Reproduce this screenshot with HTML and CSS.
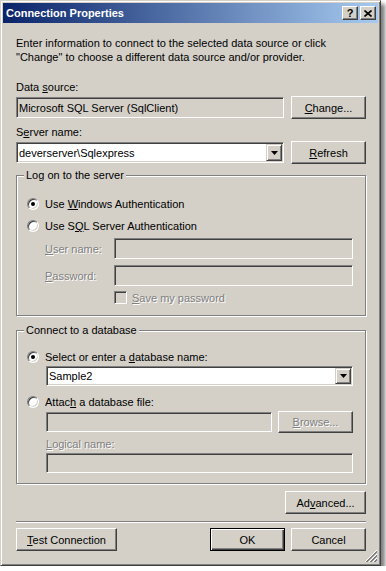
FILE: index.html
```html
<!DOCTYPE html>
<html lang="en">
<head>
  <meta charset="UTF-8" />
  <title>Connection Properties</title>
  <link rel="stylesheet" href="styles.css">
</head>
<body>

  <div class="window">
    <!-- title bar -->
    <div class="titlebar">
      <span class="title">Connection Properties</span>
      <span class="cap-btn help">?</span>
      <span class="cap-btn close">
        <svg width="8" height="7" viewBox="0 0 8 7"><path d="M0.5 0.5L7.5 6.5M7.5 0.5L0.5 6.5" stroke="#000" stroke-width="1.6"/></svg>
      </span>
    </div>

    <div class="content">
      <p class="intro">Enter information to connect to the selected data source or click "Change" to choose a different data source and/or provider.</p>

      <div class="label label-first">Data <u>s</u>ource:</div>
      <div class="row">
        <div class="edit readonly">Microsoft SQL Server (SqlClient)</div>
        <button class="btn"><u>C</u>hange...</button>
      </div>

      <div class="label label-server">S<u>e</u>rver name:</div>
      <div class="row row-tight">
        <div class="edit combo">
          <span class="combo-text">deverserver\Sqlexpress</span>
          <span class="drop"><svg width="7" height="4" viewBox="0 0 7 4"><path d="M0 0H7L3.5 4Z" fill="#000"/></svg></span>
        </div>
        <button class="btn"><u>R</u>efresh</button>
      </div>

      <fieldset class="group group-logon">
        <legend>Log on to the server</legend>
        <div class="radio-row radio-first">
          <span class="radio checked"></span>
          <span>Use <u>W</u>indows Authentication</span>
        </div>
        <div class="radio-row radio-second">
          <span class="radio"></span>
          <span>Use S<u>Q</u>L Server Authentication</span>
        </div>
        <div class="field-row field-user">
          <span class="field-label disabled"><u>U</u>ser name:</span>
          <div class="edit disabled-edit"></div>
        </div>
        <div class="field-row field-pass">
          <span class="field-label disabled"><u>P</u>assword:</span>
          <div class="edit disabled-edit"></div>
        </div>
        <div class="check-row">
          <span class="check"></span>
          <span class="disabled"><u>S</u>ave my password</span>
        </div>
      </fieldset>

      <fieldset class="group group-db">
        <legend>Connect to a database</legend>
        <div class="radio-row db-radio-first">
          <span class="radio checked"></span>
          <span>Select or enter a <u>d</u>atabase name:</span>
        </div>
        <div class="edit combo db-combo indent">
          <span class="combo-text">Sample2</span>
          <span class="drop"><svg width="7" height="4" viewBox="0 0 7 4"><path d="M0 0H7L3.5 4Z" fill="#000"/></svg></span>
        </div>
        <div class="radio-row db-radio-second">
          <span class="radio"></span>
          <span>Attac<u>h</u> a database file:</span>
        </div>
        <div class="attach-row indent">
          <div class="edit disabled-edit"></div>
          <button class="btn btn-disabled"><u>B</u>rowse...</button>
        </div>
        <div class="logical-label indent disabled"><u>L</u>ogical name:</div>
        <div class="edit disabled-edit logical-edit indent"></div>
      </fieldset>

      <div class="advanced-row">
        <button class="btn btn-advanced">Ad<u>v</u>anced...</button>
      </div>

      <div class="separator"></div>

      <div class="footer">
        <button class="btn btn-test"><u>T</u>est Connection</button>
        <button class="btn btn-default">OK</button>
        <button class="btn">Cancel</button>
      </div>
    </div>

    <svg class="grip" width="12" height="12" viewBox="0 0 12 12">
      <path d="M12 0L0 12M12 4L4 12M12 8L8 12" stroke="#fff" stroke-width="1"/>
      <path d="M12 1L1 12M12 2L2 12M12 5L5 12M12 6L6 12M12 9L9 12M12 10L10 12" stroke="#808080" stroke-width="1"/>
    </svg>
  </div>

</body>
</html>
```

FILE: styles.css
```css
* { margin: 0; padding: 0; box-sizing: border-box; }
body {
  background: #fff;
  font-family: "Liberation Sans", Arial, sans-serif;
  font-size: 11px;
  color: #000;
}
u { text-underline-offset: 1px; }

.window {
  position: relative;
  width: 381px;
  height: 566px;
  background: #d4d0c8;
  border: 1px solid;
  border-color: #d4d0c8 #404040 #404040 #d4d0c8;
  box-shadow: inset 1px 1px 0 #fff, inset -1px -1px 0 #808080, 4px 4px 4px rgba(0, 0, 0, 0.5);
  padding: 2px;
  display: flex;
  flex-direction: column;
}

/* title bar */
.titlebar {
  height: 20px;
  display: flex;
  align-items: center;
  gap: 2px;
  padding: 0 2px 0 3px;
  background: linear-gradient(to right, #0a246a, #a6caf0);
}
.title {
  flex: 1;
  color: #fff;
  font-weight: bold;
}
.cap-btn {
  width: 16px;
  height: 14px;
  display: flex;
  align-items: center;
  justify-content: center;
  background: #d4d0c8;
  border: 1px solid;
  border-color: #fff #404040 #404040 #fff;
  box-shadow: inset -1px -1px 0 #808080;
  font-weight: bold;
  font-size: 11px;
  line-height: 12px;
}

/* content */
.content {
  flex: 1;
  padding: 13px 12px 0 13px;
}
.intro { line-height: 14px; }
.label { line-height: 14px; }
.label-first { margin-top: 16px; }
.label-server { margin-top: 6px; }

.row {
  display: flex;
  align-items: center;
  gap: 7px;
  height: 23px;
  margin-top: 2px;
}
.row .edit { flex: 1; height: 21px; }
.row .btn { width: 75px; }

.edit {
  display: flex;
  align-items: center;
  padding-left: 2px;
  background: #fff;
  border: 1px solid;
  border-color: #808080 #fff #fff #808080;
  box-shadow: inset 1px 1px 0 #404040, inset -1px -1px 0 #d4d0c8;
}
.readonly, .disabled-edit { background: #d4d0c8; }

.combo { padding-right: 1px; }
.combo-text { flex: 1; }
.drop {
  width: 16px;
  height: calc(100% - 2px);
  display: flex;
  align-items: center;
  justify-content: center;
  background: #d4d0c8;
  border: 1px solid;
  border-color: #d4d0c8 #404040 #404040 #d4d0c8;
  box-shadow: inset 1px 1px 0 #fff, inset -1px -1px 0 #808080;
}

.btn {
  height: 23px;
  background: #d4d0c8;
  border: 1px solid;
  border-color: #fff #404040 #404040 #fff;
  box-shadow: inset -1px -1px 0 #808080;
  font: inherit;
  color: #000;
}
.btn-disabled {
  color: #808080;
  text-shadow: 1px 1px 0 #fff;
}
.btn-default {
  border-color: #000;
  box-shadow: inset 1px 1px 0 #fff, inset -1px -1px 0 #404040, inset -2px -2px 0 #808080;
}

/* group boxes */
.group {
  border: 1px solid #808080;
  box-shadow: inset 1px 1px 0 #fff, 1px 1px 0 #fff;
  padding: 0 12px 11px 10px;
}
.group legend {
  margin-left: -3px;
  padding: 0 2px;
  line-height: 14px;
  background: #d4d0c8;
}
.group-logon { margin-top: 4px; }
.group-db { margin-top: 7px; padding-bottom: 10px; }

.radio-row {
  display: flex;
  align-items: center;
  gap: 6px;
  height: 14px;
}
.radio-first { margin-top: 15px; }
.radio-second { margin-top: 8px; }
.db-radio-first { margin-top: 13px; }
.db-radio-second { margin-top: 9px; }

.radio {
  position: relative;
  width: 12px;
  height: 12px;
  border-radius: 50%;
  background: #fff;
  border: 1px solid;
  border-color: #808080 #fff #fff #808080;
  box-shadow: inset 1px 1px 0 #404040, inset -1px -1px 0 #d4d0c8;
}
.radio.checked::after {
  content: "";
  position: absolute;
  top: 3px;
  left: 3px;
  width: 4px;
  height: 4px;
  border-radius: 50%;
  background: #000;
}

.field-row {
  display: flex;
  align-items: center;
  height: 21px;
  padding-left: 18px;
}
.field-row .edit { flex: 1; height: 21px; }
.field-label { width: 69px; }
.field-user { margin-top: 5px; }
.field-pass { margin-top: 6px; }

.disabled {
  color: #808080;
  text-shadow: 1px 1px 0 #fff;
}

.check-row {
  display: flex;
  align-items: center;
  gap: 5px;
  height: 13px;
  margin-top: 5px;
  padding-left: 87px;
}
.check {
  width: 13px;
  height: 13px;
  background: #d4d0c8;
  border: 1px solid;
  border-color: #808080 #fff #fff #808080;
  box-shadow: inset 1px 1px 0 #404040, inset -1px -1px 0 #d4d0c8;
}

.indent { margin-left: 19px; }
.db-combo { height: 20px; margin-top: 2px; }
.attach-row {
  display: flex;
  align-items: center;
  gap: 6px;
  height: 22px;
  margin-top: 2px;
}
.attach-row .edit { flex: 1; height: 20px; }
.attach-row .btn { width: 75px; height: 22px; }
.logical-label { line-height: 14px; margin-top: 4px; }
.logical-edit { height: 20px; margin-top: 2px; }

/* bottom */
.advanced-row {
  display: flex;
  justify-content: flex-end;
  margin-top: 7px;
}
.btn-advanced { width: 81px; }

.separator {
  height: 2px;
  margin-top: 7px;
  border-top: 1px solid #808080;
  border-bottom: 1px solid #fff;
}

.footer {
  display: flex;
  gap: 6px;
  margin-top: 5px;
}
.footer .btn { width: 75px; }
.footer .btn-test { width: 101px; margin-right: auto; }

.grip {
  position: absolute;
  right: 3px;
  bottom: 3px;
}
```
